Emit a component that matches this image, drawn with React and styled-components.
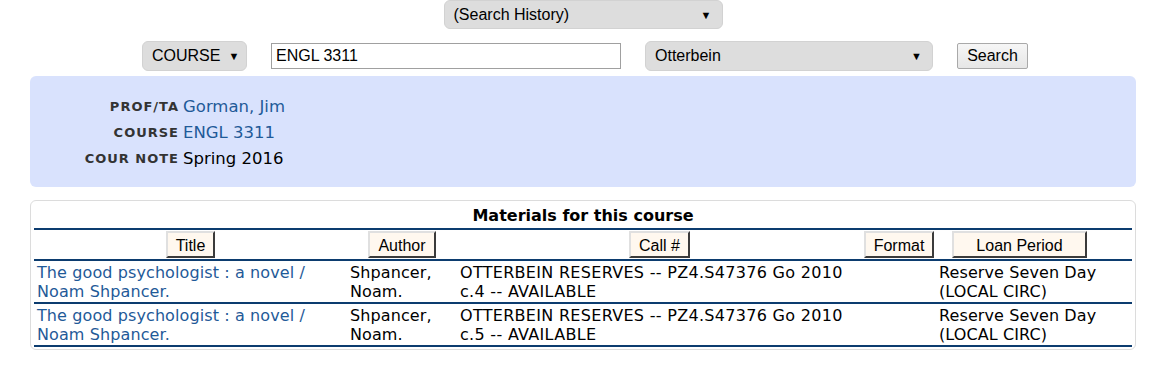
import React from "react";
import styled, { createGlobalStyle } from "styled-components";

const Global = createGlobalStyle`
  html, body { margin: 0; padding: 0; background: #fff; }
  body { font-family: "DejaVu Sans", Verdana, sans-serif; color: #000; }
`;

const Page = styled.div`
  width: 1106px;
  padding: 0 27px 0 30px;
`;

const TopRow = styled.div`
  display: flex;
  justify-content: center;
  height: 41px;
`;

const FakeSelect = styled.div`
  box-sizing: border-box;
  width: ${(p) => p.$w}px;
  height: ${(p) => p.$h || 30}px;
  background: #dddddd;
  border-radius: 6px;
  border: 1px solid #d2d2d2;
  display: flex;
  align-items: center;
  justify-content: space-between;
  padding: 0 10px 0 9px;
  font-family: "Liberation Sans", Arial, sans-serif;
  font-size: 16px;
  color: #000;
`;

const Arrow = styled.span`
  font-size: 11px;
  margin-left: 8px;
`;

const SearchRow = styled.div`
  display: flex;
  align-items: center;
  gap: 24px;
  padding-left: 112px;
  height: 30px;
`;

const TextInput = styled.div`
  box-sizing: border-box;
  width: 350px;
  height: 26px;
  border: 1px solid #a0a0a0;
  padding: 0 4px;
  display: flex;
  align-items: center;
  font-family: "Liberation Sans", Arial, sans-serif;
  font-size: 16px;
`;

const Button = styled.div`
  box-sizing: border-box;
  height: 26px;
  width: 71px;
  justify-content: center;
  border: 1px solid #a9a9a9;
  border-radius: 2px;
  background: linear-gradient(#f6f6f6, #e6e6e6);
  display: flex;
  align-items: center;
  font-family: "Liberation Sans", Arial, sans-serif;
  font-size: 16px;
`;

const InfoPanel = styled.div`
  margin-top: 5px;
  background: #d9e2fd;
  border-radius: 6px;
  padding: 17px 0 16px;
  display: grid;
  grid-template-columns: 148px 1fr;
  column-gap: 5px;
  grid-auto-rows: 26px;
`;

const Label = styled.div`
  justify-self: end;
  align-self: center;
  font-size: 13px;
  font-weight: bold;
  color: #333;
  letter-spacing: 1px;
  margin-right: -1px;
`;

const Value = styled.div`
  align-self: center;
  font-size: 16.5px;
  color: ${(p) => (p.$link ? "#1f5a98" : "#000")};
`;

const Card = styled.div`
  margin-top: 13px;
  box-sizing: border-box;
  height: 150px;
  border: 1px solid #dcdcdc;
  border-radius: 6px;
  padding: 0 3px;
`;

const Table = styled.table`
  width: 100%;
  border-collapse: collapse;
  table-layout: fixed;
`;

const Caption = styled.caption`
  height: 27px;
  line-height: 30px;
  font-size: 16px;
  font-weight: bold;
  border-bottom: 2px solid #0c3c6f;
`;

const Th = styled.th`
  padding: 1px 0 1px;
  border-bottom: 2px solid #0c3c6f;
  text-align: center;
  font-weight: normal;
`;

const SortButton = styled.span`
  display: inline-block;
  box-sizing: border-box;
  height: 27px;
  line-height: 25px;
  padding: 0 8px;
  min-width: ${(p) => p.$minW || 0}px;
  text-align: center;
  background: #fff8ef;
  border: 2px outset #c8c8c8;
  border-color: #e0e0e0 #8f8f8f #8f8f8f #e0e0e0;
  font-family: "Liberation Sans", Arial, sans-serif;
  font-size: 16px;
  vertical-align: middle;
`;

const Td = styled.td`
  padding: 2px 3px 1px 3px;
  vertical-align: top;
  font-size: 16px;
  line-height: 19px;
  letter-spacing: ${(p) => (p.$spaced ? "0.3px" : "0.1px")};
  border-bottom: 2px solid #0c3c6f;
  color: ${(p) => (p.$link ? "#1f5a98" : "#000")};
`;

const rows = [
  { copy: "c.4" },
  { copy: "c.5" },
];

export default function App() {
  return (
    <>
      <Global />
      <Page>
        <TopRow>
          <FakeSelect $w={279} $h={29}>
            <span>(Search History)</span>
            <Arrow>▼</Arrow>
          </FakeSelect>
        </TopRow>
        <SearchRow>
          <FakeSelect $w={105}>
            <span>COURSE</span>
            <Arrow>▼</Arrow>
          </FakeSelect>
          <TextInput>ENGL 3311</TextInput>
          <FakeSelect $w={288}>
            <span>Otterbein</span>
            <Arrow>▼</Arrow>
          </FakeSelect>
          <Button>Search</Button>
        </SearchRow>
        <InfoPanel>
          <Label>PROF/TA</Label>
          <Value $link>Gorman, Jim</Value>
          <Label>COURSE</Label>
          <Value $link>ENGL 3311</Value>
          <Label>COUR NOTE</Label>
          <Value>Spring 2016</Value>
        </InfoPanel>
        <Card>
          <Table>
            <Caption>Materials for this course</Caption>
            <colgroup>
              <col style={{ width: 313 }} />
              <col style={{ width: 110 }} />
              <col style={{ width: 405 }} />
              <col style={{ width: 74 }} />
              <col style={{ width: 167 }} />
              <col />
            </colgroup>
            <thead>
              <tr>
                <Th><SortButton>Title</SortButton></Th>
                <Th><SortButton>Author</SortButton></Th>
                <Th><SortButton>Call #</SortButton></Th>
                <Th><SortButton>Format</SortButton></Th>
                <Th><SortButton $minW={135}>Loan Period</SortButton></Th>
                <Th />
              </tr>
            </thead>
            <tbody>
              {rows.map((r) => (
                <tr key={r.copy}>
                  <Td $link>The good psychologist : a novel /<br />Noam Shpancer.</Td>
                  <Td>Shpancer,<br />Noam.</Td>
                  <Td $spaced>OTTERBEIN RESERVES -- PZ4.S47376 Go 2010<br />{r.copy} -- AVAILABLE</Td>
                  <Td></Td>
                  <Td colSpan={2}>Reserve Seven Day<br />(LOCAL CIRC)</Td>
                </tr>
              ))}
            </tbody>
          </Table>
        </Card>
      </Page>
    </>
  );
}
